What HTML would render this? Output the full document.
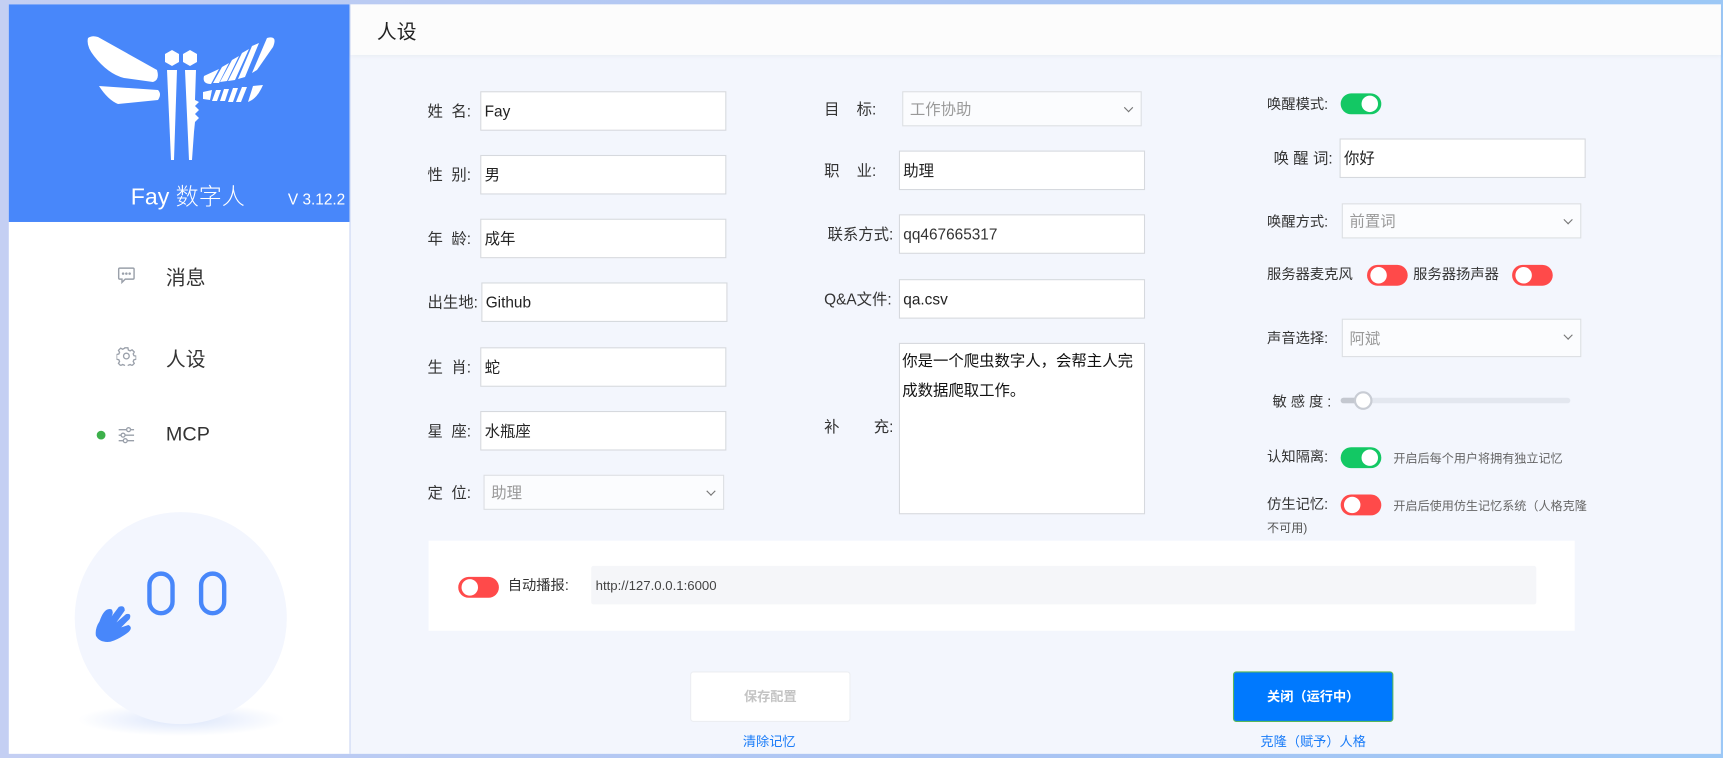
<!DOCTYPE html>
<html><head><meta charset="utf-8">
<style>
*{box-sizing:border-box;margin:0;padding:0}
html,body{width:1723px;height:758px;overflow:hidden;background:#b9c8ef}
body{font-family:"Liberation Sans","Noto Sans CJK SC",sans-serif;color:#333}
#w{position:absolute;left:0;top:0;width:1568px;height:690px;transform:scale(1.0989);transform-origin:0 0;background:linear-gradient(90deg,#c4cff3,#a9c4f3 60%,#9cc8f6)}
.a{position:absolute}
.lb{position:absolute;font-size:14px;color:#333;white-space:pre}
.in{position:absolute;background:#fff;border:1px solid #d6d9de;font-size:14px;color:#222;padding:0 3px;display:flex;align-items:center;height:36px}
.sel{position:absolute;background:#fbfcfe;border:1px solid #dcdfe3;font-size:14px;color:#999;padding:0 6px;display:flex;align-items:center;height:32px}
.sel:after{content:"";position:absolute;right:8px;top:11px;width:5px;height:5px;border-right:1.5px solid #777;border-bottom:1.5px solid #777;transform:rotate(45deg)}
.tg{position:absolute;width:37px;height:19px;border-radius:10px}
.tg:after{content:"";position:absolute;top:2px;width:15px;height:15px;border-radius:50%;background:#fff}
.on{background:#13c864}.on:after{right:3px}
.off{background:#ff4a4a}.off:after{left:3px}
.sm{position:absolute;font-size:11px;color:#666}
</style></head><body>
<div id="w">
<div class="a" style="left:8px;top:4px;width:311px;height:682px;background:#fff;border-right:1px solid #c9d6f3"></div>
<div class="a" style="left:8px;top:4px;width:310px;height:198px;background:#4887fa"></div>
<svg class="a" style="left:0;top:0" width="300.3" height="191.1" viewBox="0 0 330 210" fill="#fff">
<path d="M88,38 Q86,46 94,56 Q108,74 124,78 L153,82 Q160,80 157,70 L98,37 Q92,35 88,38Z"/>
<path d="M99,86 L158,90 Q162,94 158,100 L118,104 Q108,100 99,86Z"/>
<polygon points="172,50 179,54 179,62 172,66 165,62 165,54"/>
<polygon points="190,50 197,54 197,62 190,66 183,62 183,54"/>
<polygon points="167,70 177,70 174,160 171,160"/>
<polygon points="185,70 196,70 195,100 199,102 195,106 199,110 195,114 199,118 195,122 194,132 192,160 189,160"/>
<path d="M204,76 L219,69 L211,84 Q202,84 204,76Z"/>
<polygon points="222,67 229,63 219,83 213,83"/>
<polygon points="232,60 239,56 227,81 220,82"/>
<polygon points="242,53 249,49 235,80 228,81"/>
<polygon points="252,46 259,43 245,77 238,79"/>
<path d="M267,38 Q278,35 273,47 L257,70 L252,73 Z"/>
<polygon points="203,92 212,90 210,100 203,99"/>
<polygon points="216,90 221,90 217,101 212,101"/>
<polygon points="224,89 229,89 225,101 220,101"/>
<polygon points="233,88 238,88 233,102 228,102"/>
<polygon points="242,87 247,87 241,102 236,102"/>
<path d="M253,86 L263,85 Q257,99 248,102 Z"/>
</svg>
<div class="a" style="left:119px;top:163px;font-size:21px;color:#fff;font-weight:300">Fay 数字人</div>
<div class="a" style="left:262px;top:173px;font-size:14px;color:#fff">V 3.12.2</div>
<svg class="a" style="left:106px;top:242px" width="18" height="18" viewBox="0 0 18 18" fill="none" stroke="#9aa0aa" stroke-width="1.3"><path d="M3,2 H15 Q16,2 16,3 V11 Q16,12 15,12 H8 L5,15 V12 H3 Q2,12 2,11 V3 Q2,2 3,2Z"/><circle cx="6" cy="7" r=".5" fill="#9aa0aa"/><circle cx="9" cy="7" r=".5" fill="#9aa0aa"/><circle cx="12" cy="7" r=".5" fill="#9aa0aa"/></svg>
<div class="a" style="left:151px;top:239px;font-size:18px;color:#333">消息</div>
<svg class="a" style="left:106px;top:315px" width="18" height="18" viewBox="0 0 18 18" fill="none" stroke="#9aa0aa" stroke-width="1.2"><circle cx="9" cy="9" r="2.6"/><path d="M7.6,1.5h2.8l.4,2 1.6.8 1.8-1 2 2-1 1.8.7 1.6 2,.4v2.8l-2,.4-.7 1.6 1 1.8-2 2-1.8-1-1.6.7-.4 2H7.6l-.4-2-1.6-.7-1.8 1-2-2 1-1.8-.7-1.6-2-.4V7.6l2-.4.7-1.6-1-1.8 2-2 1.8 1 1.6-.8z"/></svg>
<div class="a" style="left:151px;top:313px;font-size:18px;color:#333">人设</div>
<div class="a" style="left:88px;top:392px;width:8px;height:8px;border-radius:50%;background:#3db04b"></div>
<svg class="a" style="left:106px;top:388px" width="18" height="16" viewBox="0 0 18 16" fill="none" stroke="#9aa0aa" stroke-width="1.2"><path d="M2,3H16M2,8H16M2,13H16"/><circle cx="11" cy="3" r="1.8" fill="#fff"/><circle cx="6" cy="8" r="1.8" fill="#fff"/><circle cx="8" cy="13" r="1.8" fill="#fff"/></svg>
<div class="a" style="left:151px;top:385px;font-size:18px;color:#333">MCP</div>
<div class="a" style="left:70px;top:640px;width:190px;height:30px;border-radius:50%;background:radial-gradient(ellipse,#dbe5fb 0%,rgba(230,237,252,0) 70%)"></div>
<div class="a" style="left:68px;top:466px;width:193px;height:193px;border-radius:50%;background:#f3f6fe"></div>
<div class="a" style="left:134px;top:520px;width:25px;height:40px;border:4px solid #4887fa;border-radius:13px"></div>
<div class="a" style="left:181px;top:520px;width:25px;height:40px;border:4px solid #4887fa;border-radius:13px"></div>
<svg class="a" style="left:84px;top:550px" width="46" height="44" viewBox="0 0 42 40" fill="#4887fa"><path d="M6,14 Q10,2 16,4 Q18,6 16,10 L22,2 Q27,0 27,5 L20,15 L28,8 Q33,7 31,12 L24,19 L30,17 Q34,19 30,23 Q22,29 15,31 Q6,32 3,26 Q2,20 6,14Z"/></svg>
<div class="a" style="left:319px;top:4px;width:1247px;height:682px;background:#f3f6fd"></div>
<div class="a" style="left:319px;top:4px;width:1247px;height:46px;background:#fcfcfc;box-shadow:0 2px 4px rgba(0,0,0,.04)"></div>
<div class="a" style="left:343px;top:15px;font-size:18px;color:#222">人设</div>
<div class="lb" style="left:389px;top:91px">姓  名:</div><div class="in" style="left:437px;top:83px;width:224px">Fay</div>
<div class="lb" style="left:389px;top:149px">性  别:</div><div class="in" style="left:437px;top:141px;width:224px">男</div>
<div class="lb" style="left:389px;top:207px">年  龄:</div><div class="in" style="left:437px;top:199px;width:224px">成年</div>
<div class="lb" style="left:389px;top:265px">出生地:</div><div class="in" style="left:438px;top:257px;width:224px">Github</div>
<div class="lb" style="left:389px;top:324px">生  肖:</div><div class="in" style="left:437px;top:316px;width:224px">蛇</div>
<div class="lb" style="left:389px;top:382px">星  座:</div><div class="in" style="left:437px;top:374px;width:224px">水瓶座</div>
<div class="lb" style="left:389px;top:438px">定  位:</div><div class="sel" style="left:440px;top:432px;width:219px">助理</div>
<div class="lb" style="left:750px;top:89px">目    标:</div><div class="sel" style="left:821px;top:83px;width:218px">工作协助</div>
<div class="lb" style="left:750px;top:145px">职    业:</div><div class="in" style="left:818px;top:137px;width:224px">助理</div>
<div class="lb" style="left:753px;top:203px">联系方式:</div><div class="in" style="left:818px;top:195px;width:224px;color:#333">qq467665317</div>
<div class="lb" style="left:750px;top:262px">Q&amp;A文件:</div><div class="in" style="left:818px;top:254px;width:224px">qa.csv</div>
<div class="lb" style="left:750px;top:378px">补        充:</div>
<div class="a" style="left:818px;top:312px;width:224px;height:156px;background:#fff;border:1px solid #d6d9de;font-size:14px;line-height:27px;padding:2px 2px;color:#111">你是一个爬虫数字人，会帮主人完成数据爬取工作。</div>
<div class="lb" style="left:1153px;top:84px;font-size:13px">唤醒模式:</div><div class="tg on" style="left:1220px;top:85px"></div>
<div class="lb" style="left:1159px;top:134px">唤 醒 词:</div><div class="in" style="left:1219px;top:126px;width:224px">你好</div>
<div class="lb" style="left:1153px;top:191px;font-size:13px">唤醒方式:</div><div class="sel" style="left:1221px;top:185px;width:218px">前置词</div>
<div class="lb" style="left:1153px;top:239px;font-size:13px">服务器麦克风</div><div class="tg off" style="left:1244px;top:241px"></div>
<div class="lb" style="left:1286px;top:239px;font-size:13px">服务器扬声器</div><div class="tg off" style="left:1376px;top:241px"></div>
<div class="lb" style="left:1153px;top:297px;font-size:13px">声音选择:</div><div class="sel" style="left:1221px;top:290px;width:218px;height:35px">阿斌</div>
<div class="lb" style="left:1158px;top:355px;font-size:13px">敏 感 度 :</div>
<div class="a" style="left:1220px;top:362px;width:209px;height:5px;border-radius:3px;background:#e3e7ef"></div>
<div class="a" style="left:1220px;top:362px;width:20px;height:5px;border-radius:3px;background:#c4c8d0"></div>
<div class="a" style="left:1232px;top:356px;width:17px;height:17px;border-radius:50%;background:#fff;border:2px solid #c8ccd4"></div>
<div class="lb" style="left:1153px;top:405px;font-size:13px">认知隔离:</div><div class="tg on" style="left:1220px;top:407px"></div>
<div class="sm" style="left:1268px;top:409px">开启后每个用户将拥有独立记忆</div>
<div class="lb" style="left:1153px;top:448px;font-size:13px">仿生记忆:</div><div class="tg off" style="left:1220px;top:450px"></div>
<div class="sm" style="left:1268px;top:452px">开启后使用仿生记忆系统（人格克隆</div>
<div class="sm" style="left:1153px;top:472px;color:#555">不可用)</div>
<div class="a" style="left:390px;top:492px;width:1043px;height:82px;background:#fff"></div>
<div class="tg off" style="left:417px;top:525px;width:37px"></div>
<div class="lb" style="left:462px;top:522px;font-size:13px">自动播报:</div>
<div class="a" style="left:538px;top:515px;width:860px;height:35px;background:#f5f6f9;border-radius:2px;font-size:12px;color:#444;padding:11px 4px">http://127.0.0.1:6000</div>
<div class="a" style="left:628px;top:611px;width:146px;height:46px;background:#fff;border:1px solid #eceef2;border-radius:3px;font-size:12px;font-weight:bold;color:#c4c4c4;text-align:center;line-height:44px">保存配置</div>
<div class="a" style="left:650px;top:666px;width:100px;text-align:center;font-size:12px;color:#1a7cf8">清除记忆</div>
<div class="a" style="left:1122px;top:611px;width:146px;height:46px;background:#0079fe;border:1px solid #5ab85a;border-radius:3px;font-size:12px;font-weight:bold;color:#fff;text-align:center;line-height:44px">关闭（运行中）</div>
<div class="a" style="left:1125px;top:666px;width:140px;text-align:center;font-size:12px;color:#1a7cf8">克隆（赋予）人格</div>
</div>
</body></html>
